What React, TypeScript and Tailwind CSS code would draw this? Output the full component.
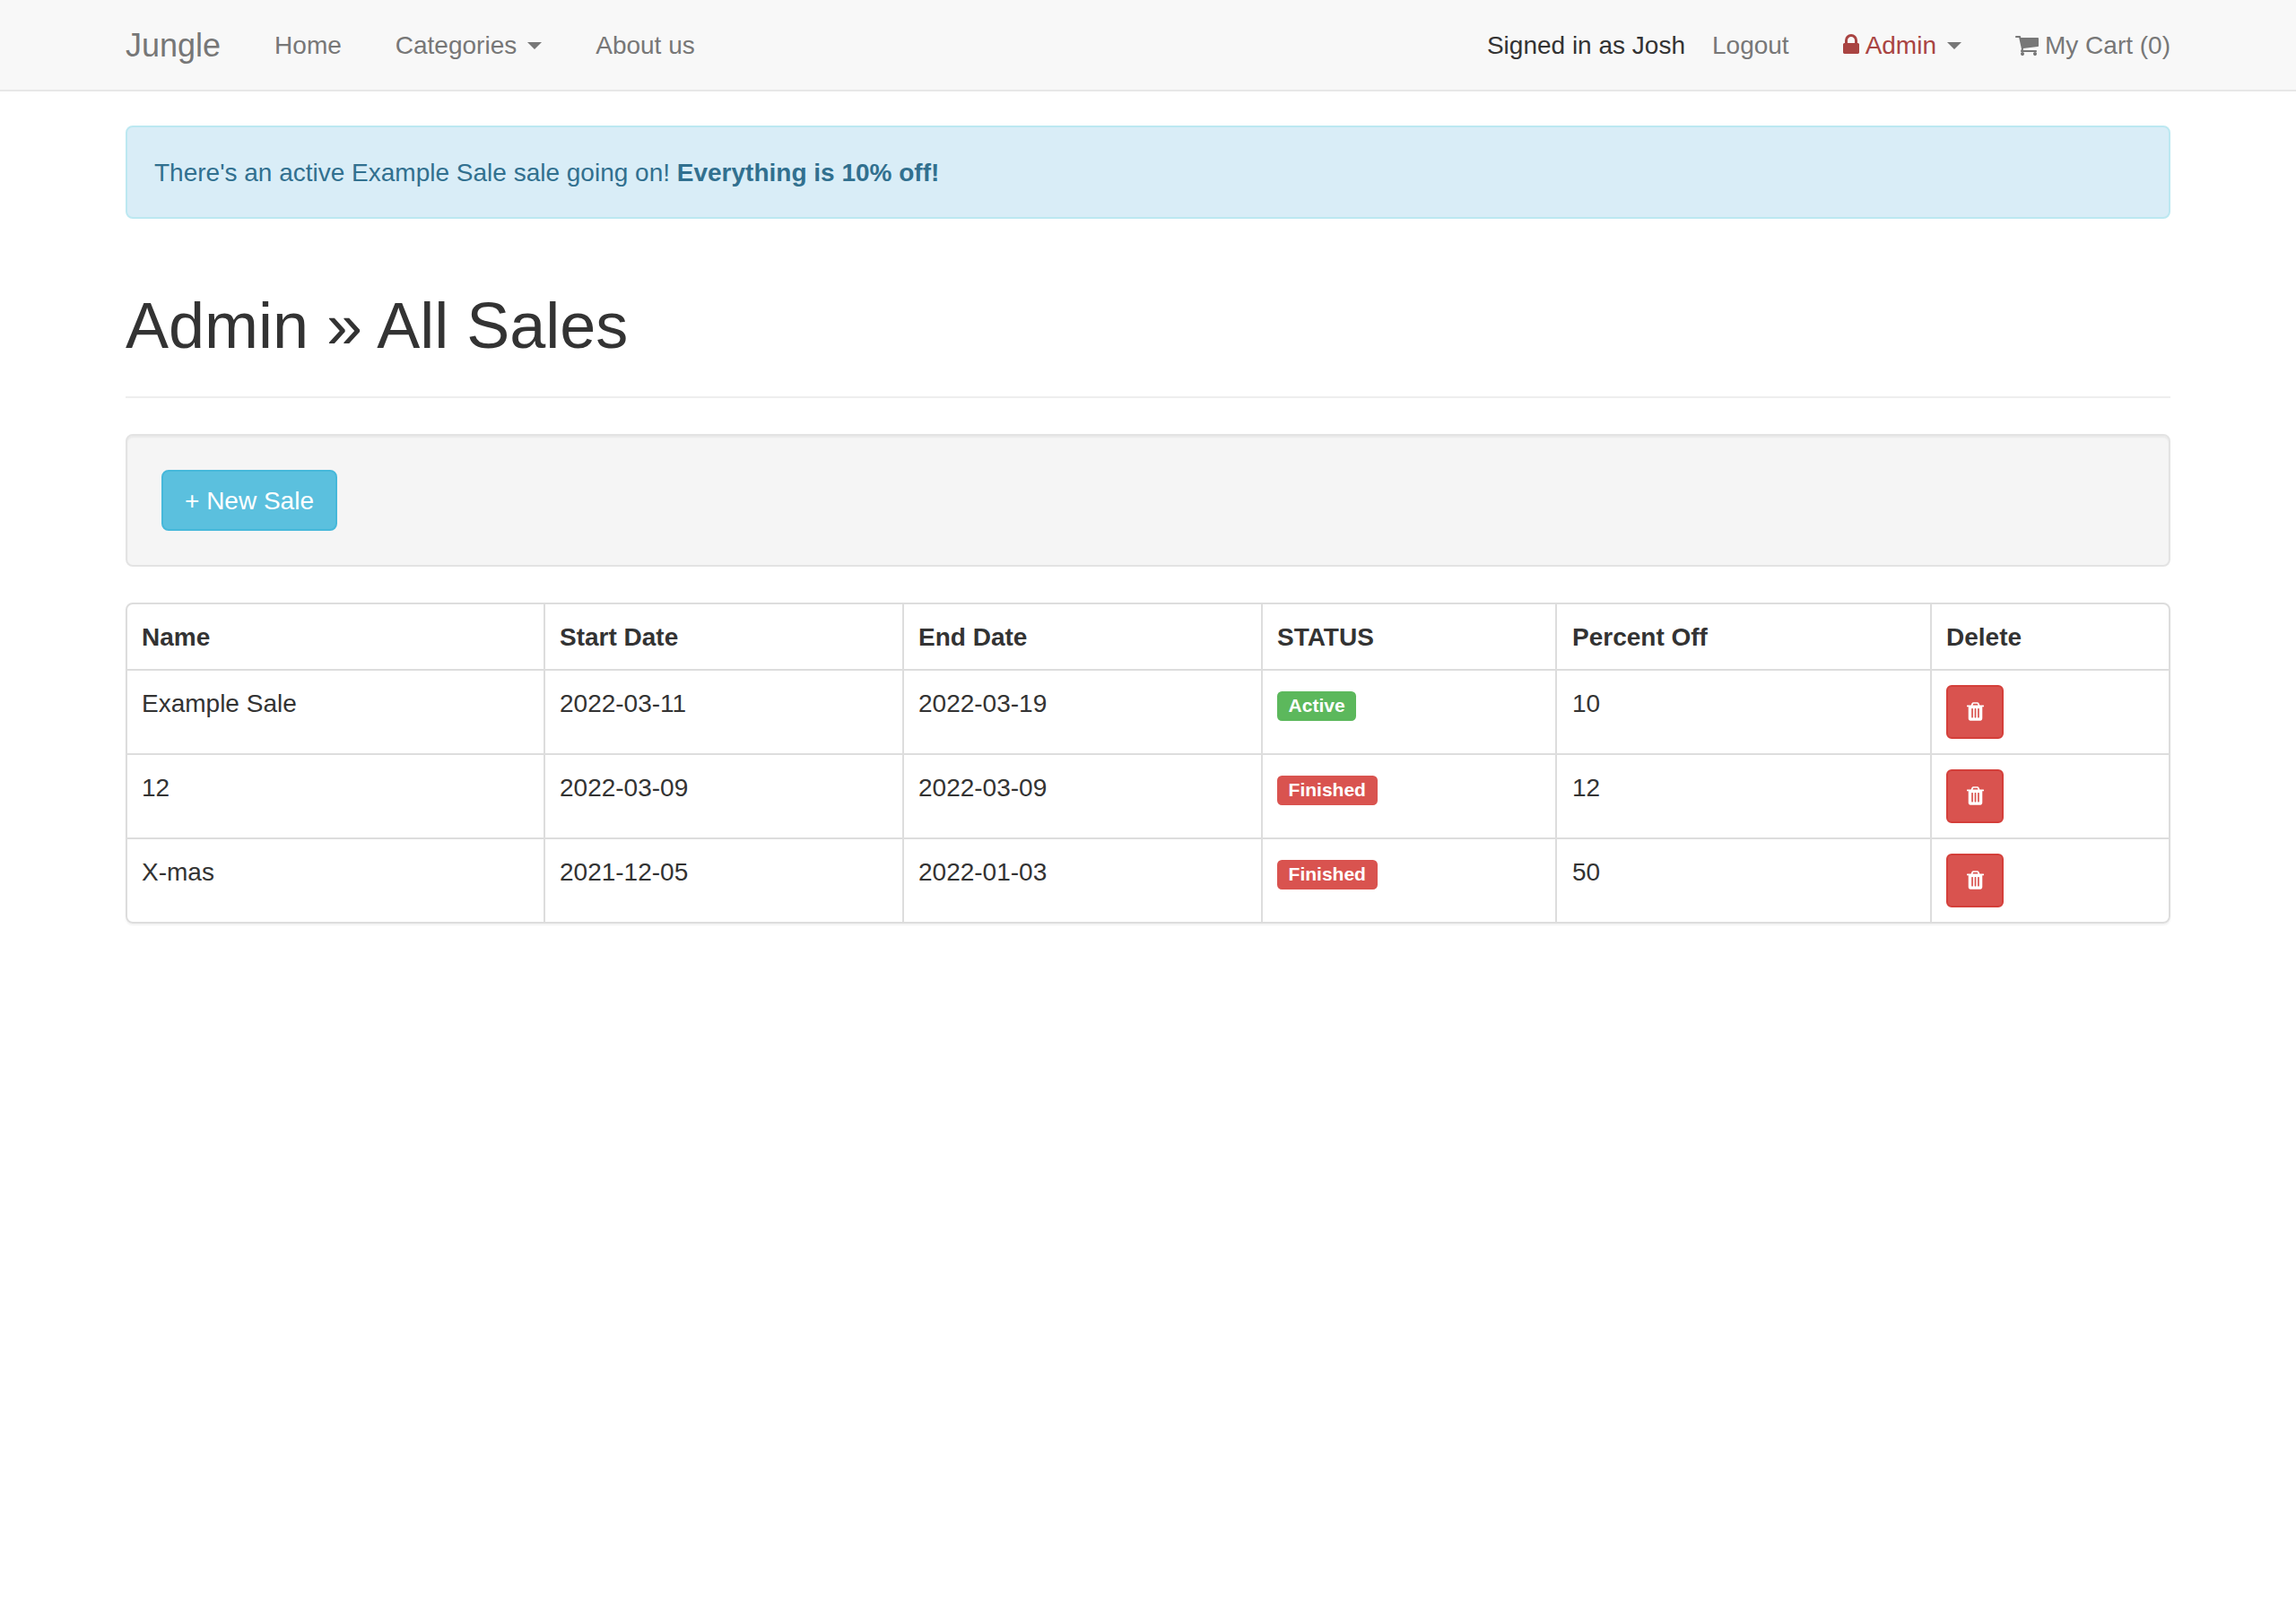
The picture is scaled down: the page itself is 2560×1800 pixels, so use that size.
const sales = [
  { name: "Example Sale", start: "2022-03-11", end: "2022-03-19", status: "Active", percent: "10" },
  { name: "12", start: "2022-03-09", end: "2022-03-09", status: "Finished", percent: "12" },
  { name: "X-mas", start: "2021-12-05", end: "2022-01-03", status: "Finished", percent: "50" },
];

const headers = ["Name", "Start Date", "End Date", "STATUS", "Percent Off", "Delete"];

const Caret = () => (
  <span className="ml-3 h-0 w-0 border-x-8 border-t-8 border-x-transparent border-t-[#777]" />
);

const LockIcon = () => (
  <svg viewBox="256 128 1280 1408" className="mb-1 mr-[6px] h-[22px] w-[20px] fill-current">
    <path d="M640 768h512v-192q0-106-75-181t-181-75-181 75-75 181v192zm832 96v576q0 40-28 68t-68 28h-960q-40 0-68-28t-28-68v-576q0-40 28-68t68-28h32v-192q0-184 132-316t316-132 316 132 132 316v192h32q40 0 68 28t28 68z" />
  </svg>
);

const CartIcon = () => (
  <svg viewBox="64 256 1664 1408" className="mr-[7px] h-[22px] w-[26px] fill-current">
    <path d="M704 1536q0 52-38 90t-90 38-90-38-38-90 38-90 90-38 90 38 38 90zm896 0q0 52-38 90t-90 38-90-38-38-90 38-90 90-38 90 38 38 90zm128-1088v512q0 24-16.5 42.5t-40.5 21.5l-1044 122q13 60 13 70 0 16-24 64h920q26 0 45 19t19 45-19 45-45 19h-1024q-26 0-45-19t-19-45q0-11 8-31.5t16-36 21.5-40 15.5-29.5l-177-823h-204q-26 0-45-19t-19-45 19-45 45-19h256q16 0 28.5 6.5t19.5 15.5 13 24.5 8 26 5.5 29.5 4.5 26h1201q26 0 45 19t19 45z" />
  </svg>
);

const TrashIcon = () => (
  <svg viewBox="192 128 1408 1536" className="mb-[2px] h-[21px] w-[19px] fill-current">
    <path d="M704 1376v-704q0-14-9-23t-23-9h-64q-14 0-23 9t-9 23v704q0 14 9 23t23 9h64q14 0 23-9t9-23zm256 0v-704q0-14-9-23t-23-9h-64q-14 0-23 9t-9 23v704q0 14 9 23t23 9h64q14 0 23-9t9-23zm256 0v-704q0-14-9-23t-23-9h-64q-14 0-23 9t-9 23v704q0 14 9 23t23 9h64q14 0 23-9t9-23zm-544-992h448l-48-117q-7-9-17-11h-317q-10 2-17 11zm928 32v64q0 14-9 23t-23 9h-96v948q0 83-47 143.5t-113 60.5h-832q-66 0-113-58.5t-47-141.5v-952h-96q-14 0-23-9t-9-23v-64q0-14 9-23t23-9h309l70-167q15-37 54-63t79-26h320q40 0 79 26t54 63l70 167h309q14 0 23 9t9 23z" />
  </svg>
);

const Navbar = () => (
  <nav className="h-[102px] border-b-2 border-[#e7e7e7] bg-[#f8f8f8] text-[#777]">
    <div className="mx-auto flex h-[100px] w-[2280px] items-center pt-[2px]">
      <a className="mr-[30px] text-[36px] leading-[40px]">Jungle</a>
      <a className="px-[30px]">Home</a>
      <a className="flex items-center px-[30px]">
        Categories
        <Caret />
      </a>
      <a className="px-[30px]">About us</a>
      <div className="ml-auto flex items-center">
        <span className="text-[#333]">Signed in as Josh</span>
        <a className="pl-[30px] pr-[29px]">Logout</a>
        <a className="flex items-center px-[30px] text-[#a94442]">
          <LockIcon />
          Admin
          <Caret />
        </a>
        <a className="flex items-center pl-[30px]">
          <CartIcon />
          My Cart (0)
        </a>
      </div>
    </div>
  </nav>
);

const StatusLabel = ({ status }: { status: string }) => (
  <span
    className={`rounded-[5.25px] px-[12.6px] pb-[6.3px] pt-[4.2px] text-[21px] font-bold leading-none text-white ${
      status === "Active" ? "bg-[#5cb85c]" : "bg-[#d9534f]"
    }`}
  >
    {status}
  </span>
);

export default function App() {
  return (
    <div className="min-h-screen bg-white font-['Liberation_Sans',Arial,sans-serif] text-[28px] leading-[40px] text-[#333]">
      <Navbar />
      <main className="mx-auto w-[2280px] pt-[38px]">
        <div className="rounded-lg border-2 border-[#bce8f1] bg-[#d9edf7] px-[30px] pb-[29px] pt-[31px] text-[#31708f]">
          There's an active Example Sale sale going on! <strong className="font-bold">Everything is 10% off!</strong>
        </div>

        <div className="mb-10 mt-[79px] border-b-2 border-[#eee] pb-[39px]">
          <h1 className="text-[72px] font-normal leading-[80px]">Admin » All Sales</h1>
        </div>

        <div className="mb-10 rounded-lg border-2 border-[#e3e3e3] bg-[#f5f5f5] p-[38px] shadow-[inset_0_2px_2px_rgba(0,0,0,0.05)]">
          <button className="block rounded-lg border-2 border-[#46b8da] bg-[#5bc0de] px-6 pb-[11px] pt-[13px] text-white">
            + New Sale
          </button>
        </div>

        <div className="overflow-hidden rounded-lg border-2 border-[#ddd] shadow-[0_2px_2px_rgba(0,0,0,0.05)]">
          <table className="w-full table-fixed border-separate border-spacing-0">
            <colgroup>
              <col className="w-[464px]" />
              <col className="w-[400px]" />
              <col className="w-[400px]" />
              <col className="w-[328px]" />
              <col className="w-[418px]" />
              <col className="w-[266px]" />
            </colgroup>
            <thead>
              <tr>
                {headers.map((header) => (
                  <th
                    key={header}
                    className={`border-b-2 border-l-2 border-[#ddd] pb-[15px] pr-4 pt-[17px] text-left font-bold first:border-l-0 ${
                      header === "Percent Off" ? "pl-[17px]" : "pl-4"
                    }`}
                  >
                    {header}
                  </th>
                ))}
              </tr>
            </thead>
            <tbody>
              {sales.map((sale, index) => {
                const rowBorder = index < sales.length - 1 ? "border-b-2" : "";
                return (
                  <tr key={sale.name}>
                    <td className={`border-[#ddd] px-4 pb-[15px] pt-[17px] align-top ${rowBorder}`}>{sale.name}</td>
                    <td className={`border-l-2 border-[#ddd] px-4 pb-[15px] pt-[17px] align-top ${rowBorder}`}>{sale.start}</td>
                    <td className={`border-l-2 border-[#ddd] px-4 pb-[15px] pt-[17px] align-top ${rowBorder}`}>{sale.end}</td>
                    <td className={`border-l-2 border-[#ddd] px-4 pb-[15px] pt-[17px] align-top ${rowBorder}`}>
                      <StatusLabel status={sale.status} />
                    </td>
                    <td className={`border-l-2 border-[#ddd] pb-[15px] pl-[17px] pr-4 pt-[17px] align-top ${rowBorder}`}>{sale.percent}</td>
                    <td className={`border-l-2 border-[#ddd] p-4 align-top ${rowBorder}`}>
                      <button className="flex h-[60px] w-16 items-center justify-center rounded-md border-2 border-[#d43f3a] bg-[#d9534f] text-white">
                        <TrashIcon />
                      </button>
                    </td>
                  </tr>
                );
              })}
            </tbody>
          </table>
        </div>
      </main>
    </div>
  );
}
